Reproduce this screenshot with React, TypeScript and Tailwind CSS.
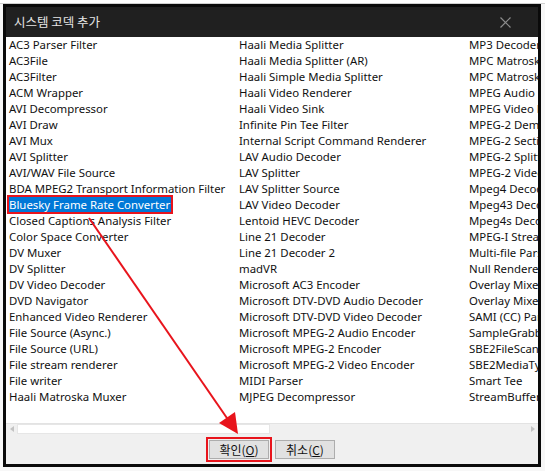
import React from 'react';

const col1 = [
  'AC3 Parser Filter', 'AC3File', 'AC3Filter', 'ACM Wrapper', 'AVI Decompressor', 'AVI Draw', 'AVI Mux',
  'AVI Splitter', 'AVI/WAV File Source', 'BDA MPEG2 Transport Information Filter', 'Bluesky Frame Rate Converter',
  'Closed Captions Analysis Filter', 'Color Space Converter', 'DV Muxer', 'DV Splitter', 'DV Video Decoder',
  'DVD Navigator', 'Enhanced Video Renderer', 'File Source (Async.)', 'File Source (URL)', 'File stream renderer',
  'File writer', 'Haali Matroska Muxer',
];

const col2 = [
  'Haali Media Splitter', 'Haali Media Splitter (AR)', 'Haali Simple Media Splitter', 'Haali Video Renderer',
  'Haali Video Sink', 'Infinite Pin Tee Filter', 'Internal Script Command Renderer', 'LAV Audio Decoder',
  'LAV Splitter', 'LAV Splitter Source', 'LAV Video Decoder', 'Lentoid HEVC Decoder', 'Line 21 Decoder',
  'Line 21 Decoder 2', 'madVR', 'Microsoft AC3 Encoder', 'Microsoft DTV-DVD Audio Decoder',
  'Microsoft DTV-DVD Video Decoder', 'Microsoft MPEG-2 Audio Encoder', 'Microsoft MPEG-2 Encoder',
  'Microsoft MPEG-2 Video Encoder', 'MIDI Parser', 'MJPEG Decompressor',
];

const col3 = [
  'MP3 Decoder DMO', 'MPC Matroska Source', 'MPC Matroska Splitter', 'MPEG Audio Decoder', 'MPEG Video Decoder',
  'MPEG-2 Demultiplexer', 'MPEG-2 Sections and Tables', 'MPEG-2 Splitter', 'MPEG-2 Video Stream Analyzer',
  'Mpeg4 Decoder DMO', 'Mpeg43 Decoder DMO', 'Mpeg4s Decoder DMO', 'MPEG-I Stream Splitter', 'Multi-file Parser',
  'Null Renderer', 'Overlay Mixer', 'Overlay Mixer2', 'SAMI (CC) Parser', 'SampleGrabber', 'SBE2FileScan',
  'SBE2MediaTypeProfile', 'Smart Tee', 'StreamBufferSink',
];

const selected = 'Bluesky Frame Rate Converter';

function Column({ items }: { items: string[] }) {
  return (
    <div className="w-[230px] shrink-0 flex flex-col">
      {items.map((name) => (
        <div key={name} className="h-[16px] leading-[16px] whitespace-nowrap">
          {name === selected ? (
            <span className="bg-[#0078d7] text-white inline-block h-[15px] leading-[15px] pr-[1px] outline-2 outline-[#e8141c]">{name}</span>
          ) : (
            <span>{name}</span>
          )}
        </div>
      ))}
    </div>
  );
}

export default function App() {
  return (
    <div
      className="relative w-[545px] h-[471px] bg-[#f7f7f7] overflow-hidden"
      style={{ fontFamily: '"Noto Sans", "Noto Sans CJK KR", sans-serif' }}
    >
      <div className="h-[4px] bg-white border-b border-[#d0d0d0]" />
      <div className="ml-[3px] w-[538px] h-[463px] border-[3px] border-[#0a0a0a] flex flex-col bg-white">
        <div className="h-[30px] shrink-0 bg-[#202020] flex items-center justify-between pl-[8px] pr-[27px]">
          <span className="text-[12.5px] text-[#e6e6e6]" style={{ fontFamily: '"Noto Sans CJK KR", sans-serif' }}>
            시스템 코덱 추가
          </span>
          <svg width="11" height="11" viewBox="0 0 11 11">
            <path d="M0.5 0.5 L10.5 10.5 M10.5 0.5 L0.5 10.5" stroke="#8c8c8c" strokeWidth="1.2" />
          </svg>
        </div>
        <div className="flex-1 flex flex-col overflow-hidden">
          <div className="flex-1 flex pl-[3px] text-[11.4px] text-[#111] overflow-hidden">
            <Column items={col1} />
            <Column items={col2} />
            <Column items={col3} />
          </div>
          <div className="h-[11px] shrink-0 flex items-center bg-[#f0f0f0] border-t border-[#e3e3e3]">
            <div className="w-[11px] h-[10px] flex items-center justify-center">
              <svg width="4" height="6" viewBox="0 0 4 6"><path d="M4 0 L0 3 L4 6 Z" fill="#c2c2c2" /></svg>
            </div>
            <div className="w-[253px] h-[10px] bg-white border border-[#e6e6e6]" />
            <div className="flex-1" />
            <div className="w-[10px] h-[10px] flex items-center justify-center">
              <svg width="4" height="6" viewBox="0 0 4 6"><path d="M0 0 L4 3 L0 6 Z" fill="#c2c2c2" /></svg>
            </div>
          </div>
          <div
            className="h-[30px] shrink-0 bg-[#f0f0f0] flex items-center justify-center gap-[6px] text-[12px] text-[#111]"
            style={{ fontFamily: '"Noto Sans CJK KR", sans-serif' }}
          >
            <button className="w-[60px] h-[19px] bg-[#e1e1e1] border border-[#adadad] leading-[17px] outline-2 outline-offset-1 outline-[#e8141c]">
              확인(<span className="underline">O</span>)
            </button>
            <button className="w-[60px] h-[19px] bg-[#e1e1e1] border border-[#adadad] leading-[17px]">
              취소(<span className="underline">C</span>)
            </button>
          </div>
        </div>
      </div>
      <svg className="absolute left-0 top-0 pointer-events-none" width="545" height="471">
        <line x1="89" y1="218" x2="229" y2="421" stroke="#e8141c" strokeWidth="2" />
        <polygon points="238,434 219,423 235,412" fill="#e8141c" />
      </svg>
    </div>
  );
}
